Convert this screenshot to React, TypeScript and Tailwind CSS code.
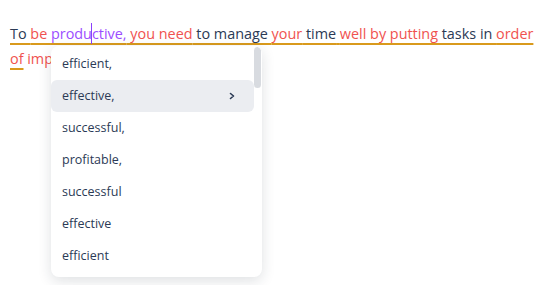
import * as React from 'react';

const navy = 'text-[#2b3a55]';

export default function App() {
  const items = ['efficient,', 'effective,', 'successful,', 'profitable,', 'successful', 'effective', 'efficient'];

  return (
    <div className="relative w-[543px] h-[285px] bg-white overflow-hidden" style={{ fontFamily: '"Open Sans", sans-serif' }}>
      <p className={`pl-[10px] pr-[4px] pt-[21px] text-[14.4px] leading-[25px] ${navy}`}>
        <span className="underline decoration-[#d99a1c] decoration-[1.5px] underline-offset-[4px]">
          To <span className="text-[#f0524f]">be </span>
          <span className="text-[#9b4dff]">produ</span>
          <span className="relative inline-block w-0">
            <span className="absolute left-[-1px] top-[-16px] w-[1.5px] h-[21px] bg-[#8a3ffc]" />
          </span>
          <span className="text-[#9b4dff]">ctive,</span>
          <span className="text-[#f0524f]"> you need</span> to manage <span className="text-[#f0524f]">your</span> time{' '}
          <span className="text-[#f0524f]">well by putting</span> tasks in <span className="text-[#f0524f]">order</span>
        </span>{' '}
        <span className="text-[#f0524f]">
          <span className="underline decoration-[#d99a1c] decoration-[1.5px] underline-offset-[4px]">of</span> importance.
        </span>
      </p>

      <div className="absolute left-[51px] top-[46px] w-[211px] h-[231px] bg-white rounded-[8px] shadow-[0_4px_14px_rgba(30,40,60,0.14)] overflow-hidden">
        <div className="pt-[2px] pr-[8px]">
          {items.map((item, i) => (
            <div
              key={i}
              className={`flex items-center justify-between h-[32px] pl-[11px] pr-[18px] text-[12.5px] rounded-[6px] ${navy} ${i === 1 ? 'bg-[#ebedf1]' : ''}`}
            >
              <span>{item}</span>
              {i === 1 && (
                <svg width="8" height="8" viewBox="0 0 8 8" fill="none">
                  <path d="M2.5 1.5 L5.5 4 L2.5 6.5" stroke="#2b3a55" strokeWidth="1.6" strokeLinecap="round" strokeLinejoin="round" />
                </svg>
              )}
            </div>
          ))}
        </div>
        <div className="absolute right-[1px] top-[1px] w-[7px] h-[41px] rounded-full bg-[#d8dbe0]" />
      </div>
    </div>
  );
}
